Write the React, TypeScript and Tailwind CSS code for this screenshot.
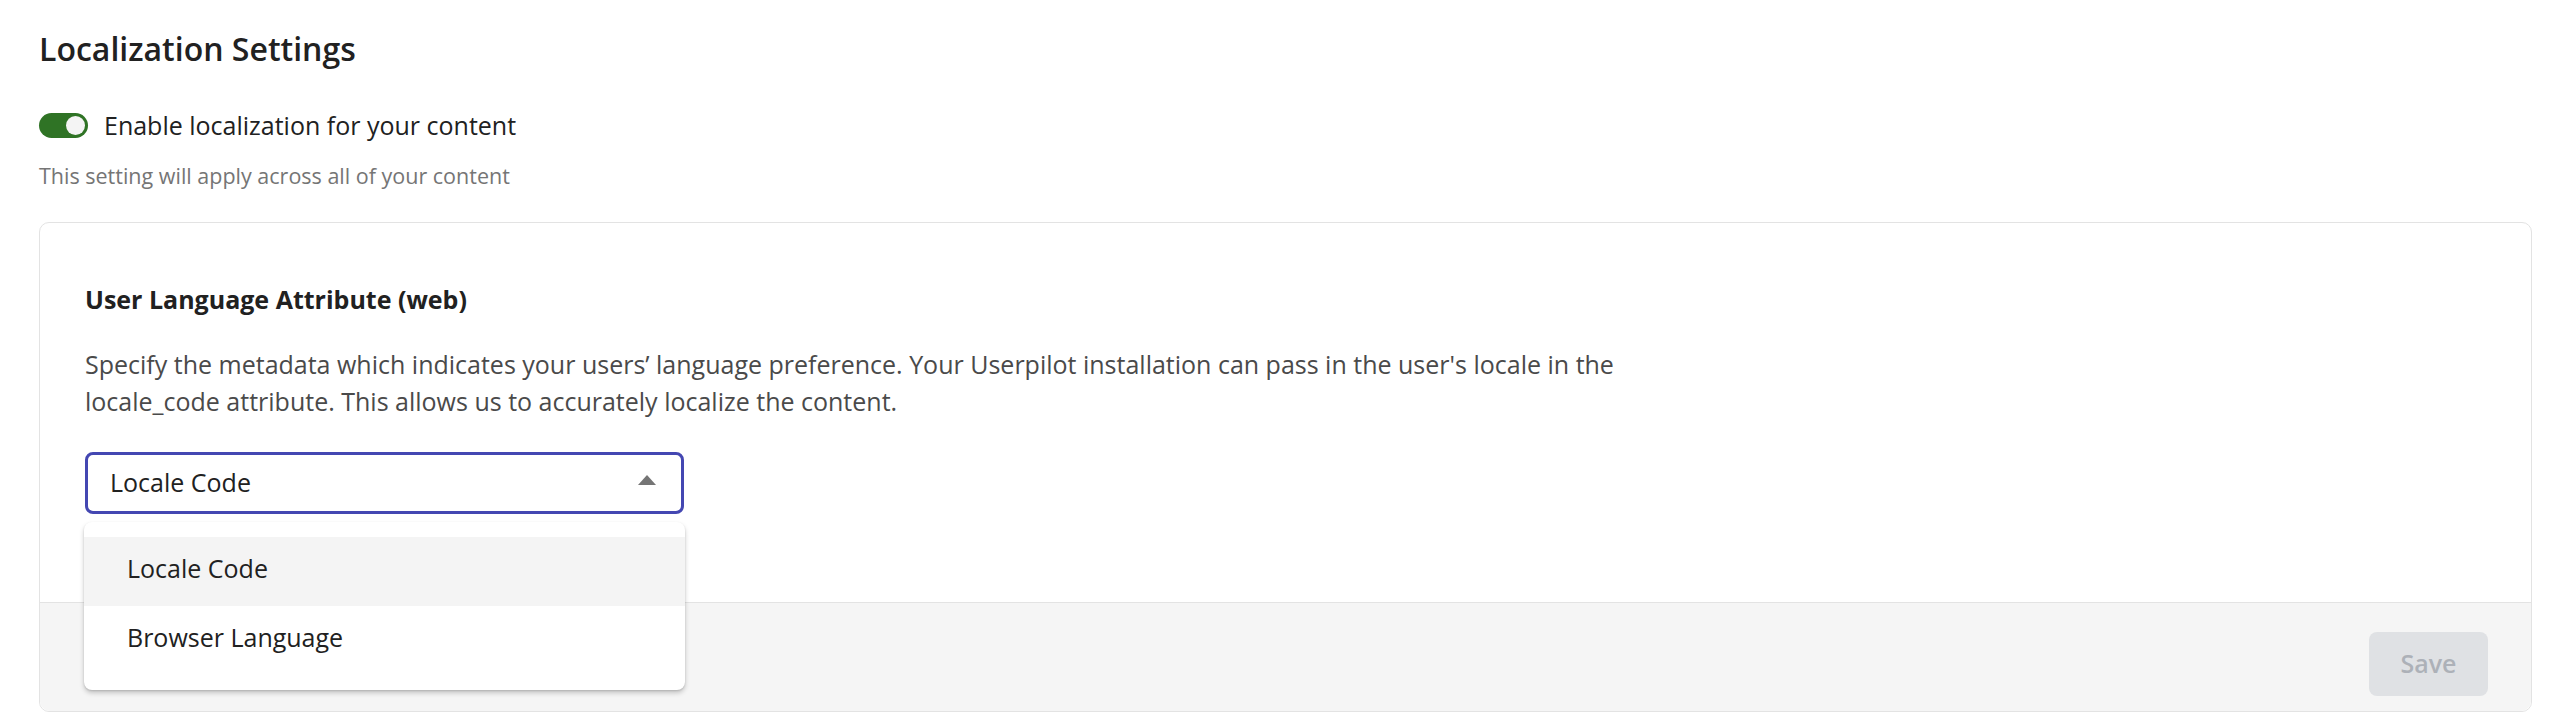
import React from 'react';

const font = { fontFamily: '"Open Sans", "Liberation Sans", sans-serif' };

const Toggle = () => (
  <div className="relative h-[25px] w-[49px] shrink-0 rounded-full bg-[#2f7325]">
    <div className="absolute right-[3px] top-[3px] h-[19px] w-[19px] rounded-full bg-[#f4f4f4]" />
  </div>
);

export default function App() {
  return (
    <div style={font} className="min-h-[714px] w-full bg-white pl-[39px] pr-[26px] pt-[25px] text-[#222222]">
      <h1 className="text-[32px] font-semibold leading-[48px] text-[#212121]">Localization Settings</h1>

      <div className="mt-[34px] flex items-center gap-[16px]">
        <Toggle />
        <span className="text-[25px] leading-[36px] text-[#212121]">Enable localization for your content</span>
      </div>
      <p className="mt-[17px] text-[21.5px] leading-[32px] text-[#757575]">
        This setting will apply across all of your content
      </p>

      {/* card */}
      <div className="mt-[30px] rounded-[10px] border border-[#e3e3e3]">
        <div className="px-[45px] pb-[88px] pt-[58px]">
          <h2 className="text-[25px] font-bold leading-[37px] text-[#212121]">User Language Attribute (web)</h2>
          <p className="mt-[28px] max-w-[1600px] text-[25px] leading-[37px] text-[#4a4a4a]">
            Specify the metadata which indicates your users’ language preference. Your Userpilot installation can pass in
            the user's locale in the locale_code attribute. This allows us to accurately localize the content.
          </p>

          <div className="relative mt-[32px] w-[599px]">
            <div className="flex h-[62px] items-center justify-between rounded-[8px] border-[3px] border-[#4447b2] pl-[22px] pr-[25px]">
              <span className="text-[25px] text-[#212121]">Locale Code</span>
              <svg width="18" height="10" viewBox="0 0 18 10" className="mt-[-6px]">
                <path d="M9 0 L18 10 L0 10 Z" fill="#757575" />
              </svg>
            </div>

            {/* open menu */}
            <div className="absolute left-[-1px] top-[70px] z-10 w-[601px] rounded-[8px] bg-white pb-[15px] pt-[15px] shadow-[0_3px_5px_rgba(0,0,0,0.2),0_1px_2px_rgba(0,0,0,0.12)]">
              <div className="flex h-[69px] items-center bg-[#f4f4f4] px-[43px] pb-[6px] text-[25px] text-[#212121]">Locale Code</div>
              <div className="flex h-[69px] items-center px-[43px] pb-[6px] text-[25px] text-[#212121]">Browser Language</div>
            </div>
          </div>
        </div>

        <div className="flex justify-end rounded-b-[10px] border-t border-[#e3e3e3] bg-[#f5f5f5] pb-[15px] pr-[43px] pt-[29px]">
          <button className="h-[64px] w-[119px] rounded-[8px] bg-[#dfe1e4] text-[25px] font-semibold text-[#adb1b8]">
            Save
          </button>
        </div>
      </div>
    </div>
  );
}
